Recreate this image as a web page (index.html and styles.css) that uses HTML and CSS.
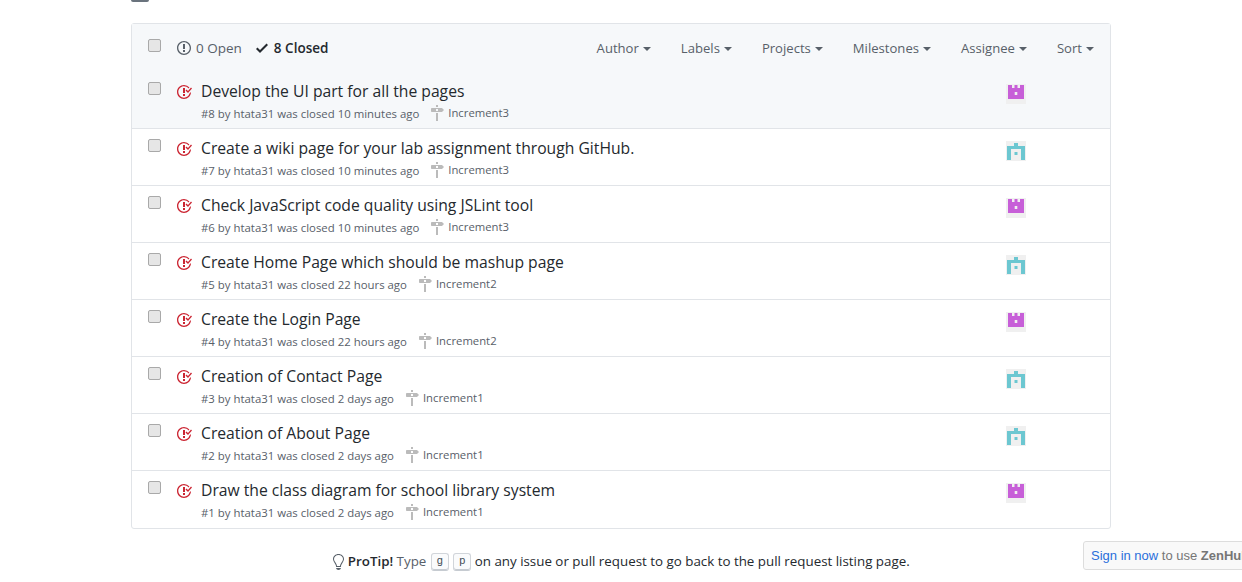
FILE: index.html
```html
<!DOCTYPE html>
<html lang="en">
<head>
    <meta charset="UTF-8">
    <meta name="viewport" content="width=device-width, initial-scale=1.0">
    <title>Issues</title>
    <link rel="stylesheet" href="styles.css">
</head>
<body>
    <svg class="defs" width="0" height="0">
        <symbol id="i-open" viewBox="0 0 14 16"><path d="M7 2.3c3.14 0 5.7 2.56 5.7 5.7s-2.56 5.7-5.7 5.7A5.71 5.71 0 0 1 1.3 8c0-3.14 2.56-5.7 5.7-5.7zM7 1C3.14 1 0 4.14 0 8s3.14 7 7 7 7-3.14 7-7-3.14-7-7-7zm1 3H6v5h2V4zm0 6H6v2h2v-2z"/></symbol>
        <symbol id="i-check" viewBox="0 0 12 16"><path d="M12 5l-8 8-4-4 1.5-1.5L4 10l6.5-6.5L12 5z"/></symbol>
        <symbol id="i-closed" viewBox="0 0 16 16"><path d="M7 10h2v2H7v-2zm2-6H7v5h2V4zm1.5 1.5l-1 1L12 9l4-4.5-1-1L12 7l-1.5-1.5zM8 13.7A5.71 5.71 0 0 1 2.3 8c0-3.14 2.56-5.7 5.7-5.7 1.83 0 3.45.88 4.5 2.2l.92-.92A6.947 6.947 0 0 0 8 1C4.14 1 1 4.14 1 8s3.14 7 7 7 7-3.14 7-7l-1.52 1.52c-.66 2.41-2.86 4.19-5.48 4.19v-.01z"/></symbol>
        <symbol id="i-milestone" viewBox="0 0 14 16"><path d="M8 2H6V0h2v2zm4 5H2c-.55 0-1-.45-1-1V4c0-.55.45-1 1-1h10l2 2-2 2zM8 4H6v2h2V4zM6 16h2V8H6v8z"/></symbol>
        <symbol id="i-bulb" viewBox="0 0 12 16"><path d="M6.5 0C3.48 0 1 2.19 1 5c0 .92.55 2.25 1 3 1.34 2.25 1.78 2.78 2 4v1h5v-1c.22-1.22.66-1.75 2-4 .45-.75 1-2.08 1-3 0-2.81-2.48-5-5.5-5zm3.64 7.48c-.25.44-.47.8-.67 1.11-.86 1.41-1.25 2.06-1.45 3.23-.02.05-.02.11-.02.17H5c0-.06 0-.13-.02-.17-.2-1.17-.59-1.83-1.45-3.23-.2-.31-.42-.67-.67-1.11C2.44 6.78 2 5.65 2 5c0-2.2 2.02-4 4.5-4 1.22 0 2.36.42 3.22 1.19C10.55 2.94 11 3.94 11 5c0 .66-.44 1.78-.86 2.48zM4 14h5c-.23 1.14-1.3 2-2.5 2s-2.27-.86-2.5-2z"/></symbol>
        <symbol id="a-purple" viewBox="0 0 20 20"><rect width="20" height="20" fill="#f0f0f0"/><path fill="#c75fd8" fill-rule="evenodd" d="M2 1h4v3h2.500V1h3v3H14V1h4v14H2zM8.700 8v3h2.600V8z"/></symbol>
        <symbol id="a-teal" viewBox="0 0 20 20"><rect width="20" height="20" fill="#f0f0f0"/><path fill="#6cc7d1" fill-rule="evenodd" d="M8 2h4v3h7v14h-4V8H5v11H1V5h7zM8.500 11h3v3h-3z"/></symbol>
    </svg>

    <div class="top-clip">
        <span class="top-btn"></span>
    </div>

    <div class="container">
        <div class="issues">
            <div class="issues-header">
                <input type="checkbox" class="check">
                <div class="states">
                    <a class="state"><svg class="icon" width="14" height="16"><use href="#i-open"/></svg>0 Open</a>
                    <a class="state selected"><svg class="icon" width="12" height="16"><use href="#i-check"/></svg>8 Closed</a>
                </div>
                <div class="filters">
                    <span class="filter">Author<i class="caret"></i></span>
                    <span class="filter">Labels<i class="caret"></i></span>
                    <span class="filter">Projects<i class="caret"></i></span>
                    <span class="filter">Milestones<i class="caret"></i></span>
                    <span class="filter">Assignee<i class="caret"></i></span>
                    <span class="filter">Sort<i class="caret"></i></span>
                </div>
            </div>

            <div class="issue first">
                <input type="checkbox" class="check">
                <svg class="closed" width="16" height="16"><use href="#i-closed"/></svg>
                <div class="issue-main">
                    <a class="issue-title">Develop the UI part for all the pages</a>
                    <div class="meta">#8 by htata31 was closed 10 minutes ago<span class="milestone"><svg class="icon" width="14" height="16"><use href="#i-milestone"/></svg>Increment3</span></div>
                </div>
                <svg class="avatar" width="20" height="20"><use href="#a-purple"/></svg>
            </div>
            <div class="issue">
                <input type="checkbox" class="check">
                <svg class="closed" width="16" height="16"><use href="#i-closed"/></svg>
                <div class="issue-main">
                    <a class="issue-title">Create a wiki page for your lab assignment through GitHub.</a>
                    <div class="meta">#7 by htata31 was closed 10 minutes ago<span class="milestone"><svg class="icon" width="14" height="16"><use href="#i-milestone"/></svg>Increment3</span></div>
                </div>
                <svg class="avatar" width="20" height="20"><use href="#a-teal"/></svg>
            </div>
            <div class="issue">
                <input type="checkbox" class="check">
                <svg class="closed" width="16" height="16"><use href="#i-closed"/></svg>
                <div class="issue-main">
                    <a class="issue-title">Check JavaScript code quality using JSLint tool</a>
                    <div class="meta">#6 by htata31 was closed 10 minutes ago<span class="milestone"><svg class="icon" width="14" height="16"><use href="#i-milestone"/></svg>Increment3</span></div>
                </div>
                <svg class="avatar" width="20" height="20"><use href="#a-purple"/></svg>
            </div>
            <div class="issue">
                <input type="checkbox" class="check">
                <svg class="closed" width="16" height="16"><use href="#i-closed"/></svg>
                <div class="issue-main">
                    <a class="issue-title">Create Home Page which should be mashup page</a>
                    <div class="meta">#5 by htata31 was closed 22 hours ago<span class="milestone"><svg class="icon" width="14" height="16"><use href="#i-milestone"/></svg>Increment2</span></div>
                </div>
                <svg class="avatar" width="20" height="20"><use href="#a-teal"/></svg>
            </div>
            <div class="issue">
                <input type="checkbox" class="check">
                <svg class="closed" width="16" height="16"><use href="#i-closed"/></svg>
                <div class="issue-main">
                    <a class="issue-title">Create the Login Page</a>
                    <div class="meta">#4 by htata31 was closed 22 hours ago<span class="milestone"><svg class="icon" width="14" height="16"><use href="#i-milestone"/></svg>Increment2</span></div>
                </div>
                <svg class="avatar" width="20" height="20"><use href="#a-purple"/></svg>
            </div>
            <div class="issue">
                <input type="checkbox" class="check">
                <svg class="closed" width="16" height="16"><use href="#i-closed"/></svg>
                <div class="issue-main">
                    <a class="issue-title">Creation of Contact Page</a>
                    <div class="meta">#3 by htata31 was closed 2 days ago<span class="milestone"><svg class="icon" width="14" height="16"><use href="#i-milestone"/></svg>Increment1</span></div>
                </div>
                <svg class="avatar" width="20" height="20"><use href="#a-teal"/></svg>
            </div>
            <div class="issue">
                <input type="checkbox" class="check">
                <svg class="closed" width="16" height="16"><use href="#i-closed"/></svg>
                <div class="issue-main">
                    <a class="issue-title">Creation of About Page</a>
                    <div class="meta">#2 by htata31 was closed 2 days ago<span class="milestone"><svg class="icon" width="14" height="16"><use href="#i-milestone"/></svg>Increment1</span></div>
                </div>
                <svg class="avatar" width="20" height="20"><use href="#a-teal"/></svg>
            </div>
            <div class="issue last">
                <input type="checkbox" class="check">
                <svg class="closed" width="16" height="16"><use href="#i-closed"/></svg>
                <div class="issue-main">
                    <a class="issue-title">Draw the class diagram for school library system</a>
                    <div class="meta">#1 by htata31 was closed 2 days ago<span class="milestone"><svg class="icon" width="14" height="16"><use href="#i-milestone"/></svg>Increment1</span></div>
                </div>
                <svg class="avatar" width="20" height="20"><use href="#a-purple"/></svg>
            </div>
        </div>

        <p class="protip">
            <svg class="bulb" width="12" height="16"><use href="#i-bulb"/></svg>
            <strong>ProTip!</strong> <span class="muted">Type</span> <kbd>g</kbd> <kbd>p</kbd> on any issue or pull request to go back to the pull request listing page.
        </p>
    </div>

    <div class="zenhub"><a>Sign in now</a> to use <strong>ZenHub</strong></div>
</body>
</html>
```

FILE: styles.css
```css
* {
    margin: 0;
    padding: 0;
    box-sizing: border-box;
}

html, body {
    height: 582px;
    overflow: hidden;
}

body {
    font-family: "Open Sans", "Noto Sans", Arial, sans-serif;
    font-size: 14px;
    background-color: #fff;
    color: #24292e;
}

.defs {
    display: block;
    height: 0;
}

.top-clip {
    height: 23px;
    width: 980px;
    margin: 0 auto;
    overflow: hidden;
}

.top-btn {
    display: block;
    width: 18px;
    height: 2px;
    background-color: #6a737d;
    border-radius: 0 0 3px 3px;
}

.container {
    width: 980px;
    margin: 0 auto;
}

.issues {
    border: 1px solid #e1e4e8;
    border-radius: 3px;
}

.issues-header {
    display: flex;
    align-items: center;
    height: 48px;
    padding: 0 16px;
    background-color: #f6f8fa;
}

.check {
    appearance: none;
    flex: none;
    width: 13px;
    height: 13px;
    background-color: #e6e6e6;
    border: 1px solid #a9a9a9;
    border-radius: 2px;
}

.issues-header .check {
    margin-top: -6px;
}

.states {
    display: flex;
    gap: 14px;
    margin-left: 16px;
    font-size: 13.5px;
}

.state {
    display: flex;
    align-items: center;
    gap: 5px;
    color: #586069;
}

.state .icon {
    fill: #586069;
}

.state.selected {
    gap: 6px;
    color: #24292e;
    font-weight: 600;
}

.state.selected .icon {
    fill: #24292e;
}

.filters {
    display: flex;
    gap: 30px;
    margin-left: auto;
    font-size: 13.1px;
    color: #586069;
}

.filter {
    display: flex;
    align-items: center;
}

.caret {
    width: 0;
    height: 0;
    margin-left: 4px;
    margin-top: 1px;
    border-top: 4px solid #586069;
    border-left: 4px solid transparent;
    border-right: 4px solid transparent;
}

.issue {
    display: flex;
    align-items: flex-start;
    height: 57px;
    padding: 9px 0 0 16px;
    border-top: 1px solid #e1e4e8;
}

.issue.first {
    height: 56px;
    border-top: none;
    background-color: #f6f8fa;
}

.issue.last {
    height: 58px;
}

.issue .check {
    margin-top: 1px;
}

.closed {
    flex: none;
    margin: 3px 0 0 15px;
    fill: #cb2431;
}

.issue-main {
    margin-left: 9px;
    flex: 1;
}

.issue-title {
    display: block;
    font-size: 15.7px;
    font-weight: 520;
    line-height: 20px;
    color: #24292e;
}

.meta {
    display: flex;
    align-items: center;
    margin-top: 4px;
    font-size: 11.4px;
    line-height: 18px;
    color: #586069;
}

.milestone {
    display: flex;
    align-items: center;
    gap: 4px;
    margin: -2px 0 0 11px;
    font-size: 11.3px;
}

.milestone .icon {
    fill: #bbb;
}

.avatar {
    flex: none;
    margin: 3px 84px 0 0;
}

.protip {
    margin-top: 22px;
    text-align: center;
    font-size: 13.35px;
    line-height: 20px;
    color: #24292e;
}

.protip strong {
    font-weight: 600;
}

.muted {
    color: #586069;
}

.bulb {
    vertical-align: text-bottom;
    fill: #586069;
}

kbd {
    display: inline-block;
    width: 18px;
    height: 18px;
    margin-left: 1px;
    text-align: center;
    vertical-align: middle;
    font-family: "Liberation Mono", monospace;
    font-size: 11px;
    line-height: 15px;
    color: #444d56;
    background-color: #fafbfc;
    border: 1px solid #d1d5da;
    border-bottom-color: #c6cbd1;
    border-radius: 3px;
    box-shadow: inset 0 -1px 0 #c6cbd1;
}

.zenhub {
    position: fixed;
    top: 541px;
    left: 1083px;
    width: 200px;
    height: 29px;
    padding-left: 7px;
    font-family: "Liberation Sans", Arial, sans-serif;
    font-size: 13px;
    line-height: 27px;
    white-space: nowrap;
    color: #767676;
    background-color: #f9f9f9;
    border: 1px solid #ddd;
    border-radius: 3px;
}

.zenhub a {
    color: #2a6fdb;
}
```
